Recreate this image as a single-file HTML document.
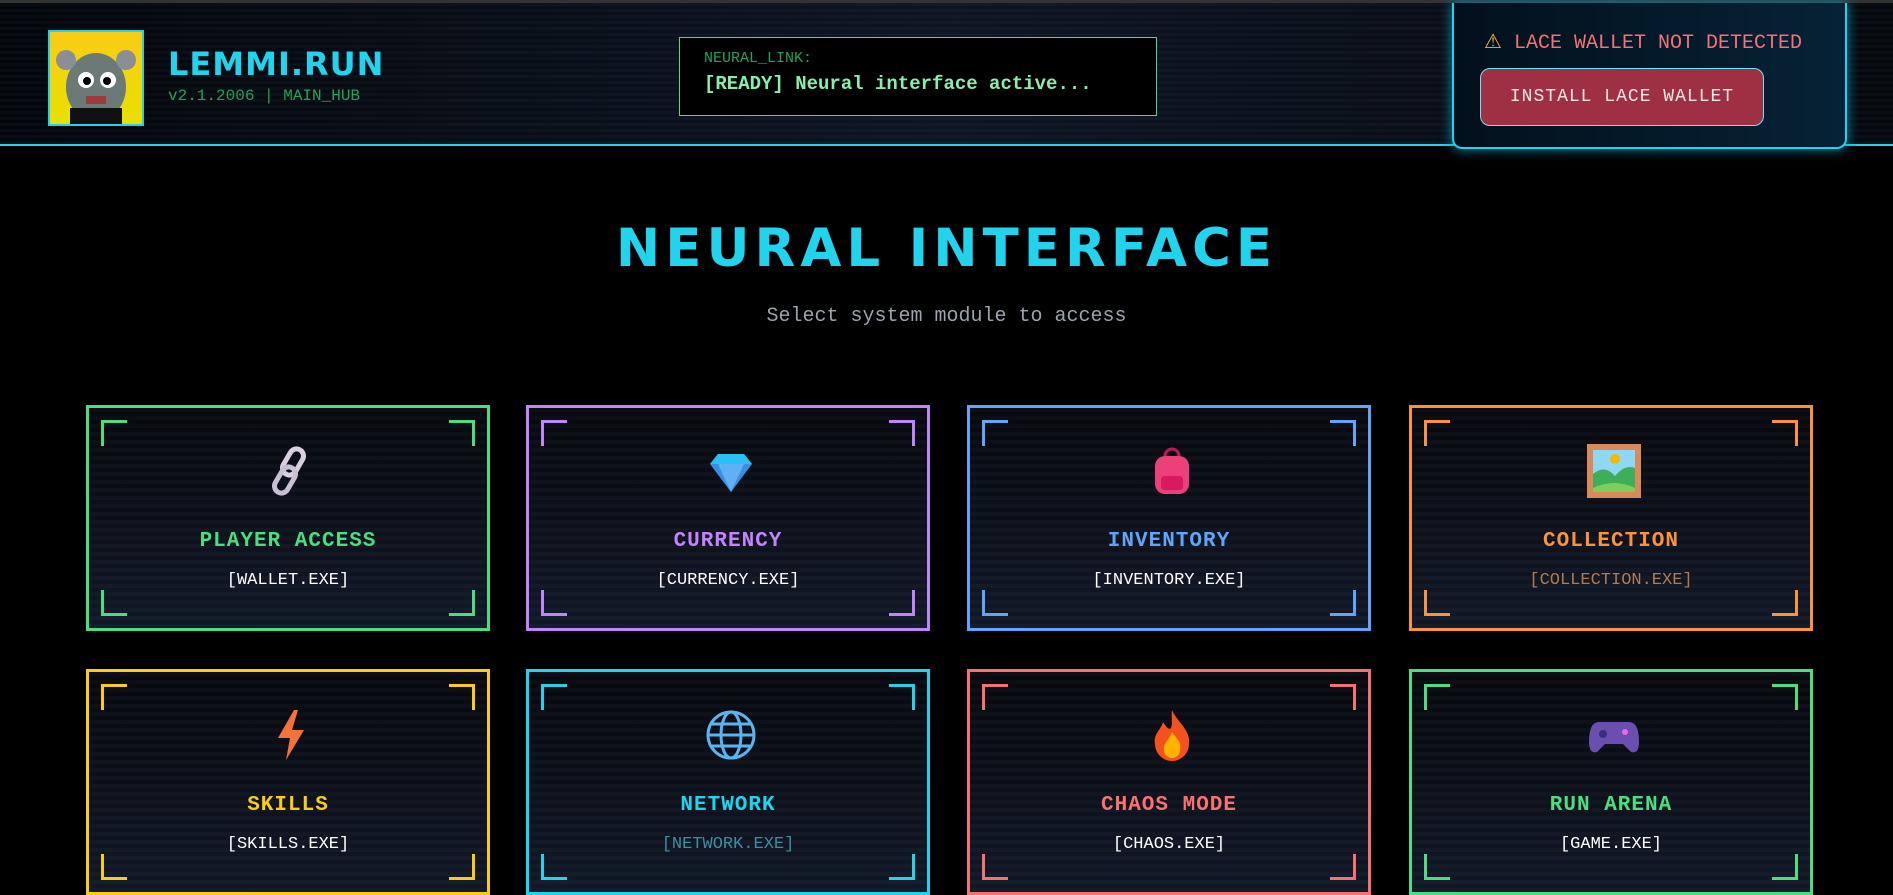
<!DOCTYPE html><html><head><meta charset="utf-8"><style>
*{margin:0;padding:0;box-sizing:border-box}
body{width:1893px;height:870px;overflow:hidden;background:#000;font-family:"Liberation Mono",monospace;position:relative}
.hdr{position:absolute;left:0;top:0;width:1893px;height:146px;background:repeating-linear-gradient(0deg,rgba(255,255,255,0.025) 0 3px,transparent 3px 6px),linear-gradient(90deg,#03060b,#0d1523 50%,#05080d);border-bottom:2px solid #22d3ee;border-top:3px solid #333}
.logo{position:absolute;left:48px;top:27px;width:96px;height:96px;border:2px solid #22d3ee;background:linear-gradient(#facc15,#e8e000);overflow:hidden}
.brand{position:absolute;left:168px;top:42px;color:#22d3ee;font:bold 32px "DejaVu Sans",sans-serif;letter-spacing:1px}
.ver{position:absolute;left:168px;top:84px;color:#22a35a;font-size:16px}
.nl{position:absolute;left:679px;top:34px;width:478px;height:79px;border:1px solid #4ade80;background:#000;padding:12px 24px}
.nl .a{color:#22a35a;font-size:15px}.nl .b{color:#86efac;font-size:19px;font-weight:bold;margin-top:6px}
.wal{position:absolute;left:1452px;top:0;width:395px;height:146px;border:2px solid #22d3ee;border-top:none;border-radius:0 0 10px 10px;background:linear-gradient(90deg,#03101c,#062236);box-shadow:0 0 12px #0891b2}
.warn{position:absolute;left:30px;top:26px;color:#f87171;font-size:20px;white-space:nowrap}
.btn{position:absolute;left:26px;top:65px;width:284px;height:58px;border:1px solid #67e8f9;border-radius:10px;background:#9f2f42;color:#fde8ea;font-size:18px;text-align:center;line-height:56px;letter-spacing:1px}
h1{position:absolute;left:0;width:1893px;top:218px;text-align:center;color:#22d3ee;font:bold 53px "DejaVu Sans",sans-serif;letter-spacing:5px}
.sub{position:absolute;left:0;width:1893px;top:305px;text-align:center;color:#9ca3af;font-size:20px}
.card{position:absolute;width:404px;height:226px;border:3px solid currentColor;background:repeating-linear-gradient(0deg,rgba(255,255,255,0.02) 0 4px,transparent 4px 8px),linear-gradient(180deg,#07090e,#111827);text-align:center}
.c{position:absolute;width:26px;height:26px}
.tl{left:12px;top:12px;border-left:3px solid currentColor;border-top:3px solid currentColor}
.tr{right:12px;top:12px;border-right:3px solid currentColor;border-top:3px solid currentColor}
.bl{left:12px;bottom:12px;border-left:3px solid currentColor;border-bottom:3px solid currentColor}
.br{right:12px;bottom:12px;border-right:3px solid currentColor;border-bottom:3px solid currentColor}
.ic{position:absolute;left:175px;top:36px;width:54px;height:54px}
.t{position:absolute;left:0;width:100%;top:122px;font-size:21px;font-weight:bold;letter-spacing:1px}
.s{position:absolute;left:0;width:100%;top:163px;font-size:17px;color:#fff}
</style></head><body>
<div class="hdr">
<div class="logo"><svg width="92" height="92"><ellipse cx="46" cy="55" rx="30" ry="34" fill="#6b7a77"/><circle cx="16" cy="28" r="10" fill="#8a8f95"/><circle cx="76" cy="28" r="10" fill="#8a8f95"/><circle cx="36" cy="48" r="8" fill="#fff"/><circle cx="58" cy="48" r="8" fill="#fff"/><circle cx="37" cy="49" r="4"/><circle cx="57" cy="49" r="4"/><rect x="36" y="64" width="20" height="8" fill="#9b3b3b"/><rect x="20" y="76" width="52" height="16" fill="#111"/></svg></div>
<div class="brand">LEMMI.RUN</div>
<div class="ver">v2.1.2006 | MAIN_HUB</div>
<div class="nl"><div class="a">NEURAL_LINK:</div><div class="b">[READY] Neural interface active...</div></div>
<div class="wal"><div class="warn"><span style="color:#f5b041">⚠</span> LACE WALLET NOT DETECTED</div><div class="btn">INSTALL LACE WALLET</div></div>
</div>
<h1>NEURAL INTERFACE</h1>
<div class="sub">Select system module to access</div>

<div class="card" style="left:86px;top:405px;color:#4ade80"><i class="c tl"></i><i class="c tr"></i><i class="c bl"></i><i class="c br"></i>
<svg class="ic" viewBox="0 0 54 54"><rect x="22" y="4" width="14" height="28" rx="7" transform="rotate(30 29 18)" fill="none" stroke="#d8d0e0" stroke-width="5"/><rect x="14" y="22" width="14" height="28" rx="7" transform="rotate(30 21 36)" fill="none" stroke="#c8c0d2" stroke-width="5"/></svg>
<div class="t" style="color:#4ade80">PLAYER ACCESS</div><div class="s">[WALLET.EXE]</div></div>

<div class="card" style="left:526px;top:405px;color:#c084fc"><i class="c tl"></i><i class="c tr"></i><i class="c bl"></i><i class="c br"></i>
<svg class="ic" viewBox="0 0 54 54"><polygon points="14,10 40,10 48,20 27,48 6,20" fill="#3b8fe0"/><polygon points="20,10 34,10 40,20 27,48 14,20" fill="#60b0f5"/><polygon points="14,10 40,10 48,20 6,20" fill="#2ac0f5"/></svg>
<div class="t" style="color:#c084fc">CURRENCY</div><div class="s">[CURRENCY.EXE]</div></div>

<div class="card" style="left:967px;top:405px;color:#60a5fa"><i class="c tl"></i><i class="c tr"></i><i class="c bl"></i><i class="c br"></i>
<svg class="ic" viewBox="0 0 54 54"><path d="M20 12a7 7 0 0 1 14 0" fill="none" stroke="#c2185b" stroke-width="3"/><rect x="10" y="12" width="34" height="38" rx="10" fill="#ec407a"/><rect x="16" y="32" width="22" height="14" rx="3" fill="#d81b60"/></svg>
<div class="t" style="color:#60a5fa">INVENTORY</div><div class="s">[INVENTORY.EXE]</div></div>

<div class="card" style="left:1409px;top:405px;color:#fb923c"><i class="c tl"></i><i class="c tr"></i><i class="c bl"></i><i class="c br"></i>
<svg class="ic" viewBox="0 0 54 54"><rect x="0" y="0" width="54" height="54" fill="#d98a5a"/><rect x="6" y="6" width="42" height="42" fill="#8fd8f5"/><circle cx="28" cy="15" r="5" fill="#f5b800"/><path d="M6 30 Q18 20 28 32 Q38 20 48 24 V48 H6Z" fill="#3fae5a"/><path d="M6 44 Q27 34 48 44 V48 H6Z" fill="#7bcf5a"/></svg>
<div class="t" style="color:#fb923c">COLLECTION</div><div class="s" style="color:#b07a55">[COLLECTION.EXE]</div></div>

<div class="card" style="left:86px;top:669px;color:#facc15"><i class="c tl"></i><i class="c tr"></i><i class="c bl"></i><i class="c br"></i>
<svg class="ic" viewBox="0 0 54 54"><polygon points="30,2 14,30 26,30 22,52 40,22 28,22 34,2" fill="#f4733b"/></svg>
<div class="t" style="color:#facc15">SKILLS</div><div class="s">[SKILLS.EXE]</div></div>

<div class="card" style="left:526px;top:669px;color:#22d3ee"><i class="c tl"></i><i class="c tr"></i><i class="c bl"></i><i class="c br"></i>
<svg class="ic" viewBox="0 0 54 54" fill="none" stroke="#5ab4f0" stroke-width="3"><circle cx="27" cy="27" r="23"/><ellipse cx="27" cy="27" rx="10" ry="23"/><line x1="4" y1="27" x2="50" y2="27"/><path d="M8 16H46M8 38H46"/></svg>
<div class="t" style="color:#22d3ee">NETWORK</div><div class="s" style="color:#3a8fa8">[NETWORK.EXE]</div></div>

<div class="card" style="left:967px;top:669px;color:#f87171"><i class="c tl"></i><i class="c tr"></i><i class="c bl"></i><i class="c br"></i>
<svg class="ic" viewBox="0 0 54 54"><path d="M27 2C32 14 46 22 44 36A17 17 0 0 1 10 36C8 26 16 22 18 14C22 20 24 22 26 20C28 14 26 8 27 2Z" fill="#f4511e"/><path d="M27 24C31 30 37 34 35 42A8 8 0 0 1 19 42C18 36 24 32 27 24Z" fill="#ffb300"/></svg>
<div class="t" style="color:#f87171">CHAOS MODE</div><div class="s">[CHAOS.EXE]</div></div>

<div class="card" style="left:1409px;top:669px;color:#4ade80"><i class="c tl"></i><i class="c tr"></i><i class="c bl"></i><i class="c br"></i>
<svg class="ic" viewBox="0 0 54 54"><path d="M12 14H42Q52 14 52 34Q52 46 44 44L36 36H18L10 44Q2 46 2 34Q2 14 12 14Z" fill="#6a4fb0"/><circle cx="38" cy="24" r="3" fill="#e6e"/><circle cx="16" cy="26" r="4" fill="#3d2d80"/></svg>
<div class="t" style="color:#4ade80">RUN ARENA</div><div class="s">[GAME.EXE]</div></div>
</body></html>
